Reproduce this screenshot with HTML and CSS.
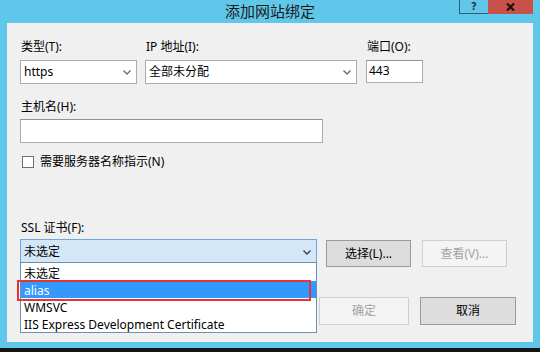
FILE: index.html
```html
<!DOCTYPE html>
<html lang="zh-CN">
<head>
<meta charset="utf-8">
<title>添加网站绑定</title>
<link rel="stylesheet" href="styles.css">
</head>
<body>
<div class="screen">
  <div class="window">
    <div class="titlebar">
      <div class="title">添加网站绑定</div>
      <div class="caption-btns">
        <div class="cbtn help">?</div>
        <div class="cbtn close">
          <svg width="9" height="8" viewBox="0 0 9 8"><path d="M1 0.5 L8 7.5 M8 0.5 L1 7.5" stroke="#1c1212" stroke-width="2.2" fill="none"/></svg>
        </div>
      </div>
    </div>
    <div class="client">
      <div class="row1">
        <div class="field type-field">
          <div class="label">类型(T):</div>
          <div class="combo">
            <span class="combo-text">https</span>
            <svg class="chev" width="8" height="5" viewBox="0 0 8 5"><polyline points="0.5,0.5 4,4 7.5,0.5" fill="none" stroke="#6a6a6a" stroke-width="1.3"/></svg>
          </div>
        </div>
        <div class="field ip-field">
          <div class="label">IP 地址(I):</div>
          <div class="combo">
            <span class="combo-text">全部未分配</span>
            <svg class="chev" width="8" height="5" viewBox="0 0 8 5"><polyline points="0.5,0.5 4,4 7.5,0.5" fill="none" stroke="#6a6a6a" stroke-width="1.3"/></svg>
          </div>
        </div>
        <div class="field port-field">
          <div class="label">端口(O):</div>
          <div class="textbox port-box">443</div>
        </div>
      </div>

      <div class="host">
        <div class="label">主机名(H):</div>
        <div class="textbox host-box"></div>
      </div>

      <div class="check-row">
        <span class="checkbox"></span>
        <span class="check-label">需要服务器名称指示(N)</span>
      </div>

      <div class="ssl">
        <div class="label">SSL 证书(F):</div>
        <div class="ssl-row">
          <div class="combo ssl-combo">
            <span class="combo-text">未选定</span>
            <svg class="chev" width="8" height="5" viewBox="0 0 8 5"><polyline points="0.5,0.5 4,4 7.5,0.5" fill="none" stroke="#3c3c3c" stroke-width="1.3"/></svg>
            <div class="dropdown">
              <div class="opt">未选定</div>
              <div class="opt selected">alias</div>
              <div class="opt">WMSVC</div>
              <div class="opt">IIS Express Development Certificate</div>
              <div class="annot"></div>
            </div>
          </div>
          <div class="btn btn-select">选择(L)...</div>
          <div class="btn btn-view disabled">查看(V)...</div>
        </div>
      </div>

      <div class="footer">
        <div class="btn btn-ok disabled">确定</div>
        <div class="btn btn-cancel">取消</div>
      </div>
    </div>
  </div>
  <div class="taskstrip"></div>
</div>
</body>
</html>
```
FILE: styles.css
```css
* { box-sizing: border-box; }

html, body {
  margin: 0;
  padding: 0;
}

body {
  width: 540px;
  height: 352px;
  overflow: hidden;
  background: #121212;
  font-family: "Noto Sans", "Noto Sans CJK SC", sans-serif;
  font-size: 12px;
  color: #000;
}

.screen {
  width: 540px;
  height: 352px;
  display: flex;
  flex-direction: column;
}

.window {
  width: 540px;
  height: 348px;
  background: #61c7ea;
  display: flex;
  flex-direction: column;
}

.taskstrip {
  flex: 1;
  background: #141414;
}

/* title bar */
.titlebar {
  height: 23px;
  display: grid;
  grid-template-columns: 1fr auto 1fr;
  align-items: start;
}

.title {
  grid-column: 2;
  font-family: "Noto Sans CJK SC", sans-serif;
  font-size: 15px;
  line-height: 21px;
  color: #1a1a1a;
}

.caption-btns {
  grid-column: 3;
  justify-self: end;
  margin-right: 7px;
  display: flex;
  height: 14px;
}

.cbtn {
  height: 14px;
  display: flex;
  align-items: center;
  justify-content: center;
}

.help {
  width: 29px;
  background: #61c7ea;
  border: 1px solid #2f6078;
  border-top: none;
  border-right: none;
  color: #1f3a4a;
  font-family: "DejaVu Sans", sans-serif;
  font-weight: bold;
  font-size: 10px;
  line-height: 11px;
}

.close {
  width: 45px;
  background: #c85048;
}

/* client area */
.client {
  margin: 0 7px;
  height: 319px;
  background: #f0f0f0;
  padding: 16px 17px 0 13px;
  display: flex;
  flex-direction: column;
}

.label {
  height: 16px;
  line-height: 16px;
  padding-left: 1px;
  white-space: nowrap;
}

.row1 {
  display: flex;
  align-items: flex-start;
}

.field {
  display: flex;
  flex-direction: column;
  gap: 5px;
}

.type-field { width: 117px; }
.ip-field { width: 212px; margin-left: 8px; }
.port-field { width: 57px; margin-left: 9px; }

.combo {
  position: relative;
  height: 24px;
  background: #fff;
  border: 1px solid #acacac;
  display: flex;
  align-items: center;
  padding-left: 3px;
}

.combo-text {
  flex: 1;
  line-height: 16px;
  white-space: nowrap;
}

.chev {
  margin-right: 5px;
  margin-top: 1px;
}

.textbox {
  background: #fff;
  border: 1px solid #abadb3;
  border-top-color: #8f9297;
}

.port-box {
  height: 23px;
  line-height: 20px;
  padding-left: 2px;
}

.host {
  margin-top: 15px;
  display: flex;
  flex-direction: column;
  gap: 4px;
}

.host-box {
  width: 303px;
  height: 24px;
}

.check-row {
  margin-top: 11px;
  height: 16px;
  display: flex;
  align-items: center;
  padding-left: 2px;
}

.checkbox {
  width: 12px;
  height: 12px;
  background: #fff;
  border: 1px solid #6f6f6f;
}

.check-label {
  margin-left: 6px;
  line-height: 16px;
}

.ssl {
  margin-top: 50px;
  display: flex;
  flex-direction: column;
  gap: 3px;
}

.ssl-row {
  display: flex;
  align-items: flex-start;
}

.ssl-combo {
  width: 297px;
  height: 25px;
  background: #d3e7f8;
  border-color: #6ea6dd;
  padding-top: 1px;
}

.dropdown {
  position: absolute;
  left: -1px;
  top: calc(100% - 1px);
  width: 297px;
  background: #fff;
  border: 1px solid #6f8fb4;
  padding-top: 1px;
  z-index: 5;
}

.opt {
  height: 17px;
  line-height: 17px;
  padding-left: 3px;
  padding-top: 1px;
  white-space: nowrap;
}

.opt.selected {
  background: #3399ff;
  color: #fff;
}

.annot {
  position: absolute;
  left: -4px;
  top: 17px;
  width: 294px;
  height: 21px;
  border: 2px solid #e2363c;
}

.btn {
  height: 27px;
  display: flex;
  align-items: center;
  justify-content: center;
  background: #dddddd;
  border: 1px solid #9a9a9a;
  line-height: 16px;
  white-space: nowrap;
}

.btn.disabled {
  background: #f4f4f4;
  border-color: #cfcfcf;
  color: #a3a3a3;
}

.btn-select {
  width: 85px;
  margin-left: 9px;
  margin-top: 1px;
}

.btn-view {
  width: 85px;
  margin-left: 11px;
  margin-top: 1px;
}

.footer {
  margin-top: 30px;
  display: flex;
  justify-content: flex-end;
  gap: 11px;
}

.btn-ok {
  width: 90px;
  height: 28px;
}

.btn-cancel {
  width: 96px;
  height: 28px;
}
```
